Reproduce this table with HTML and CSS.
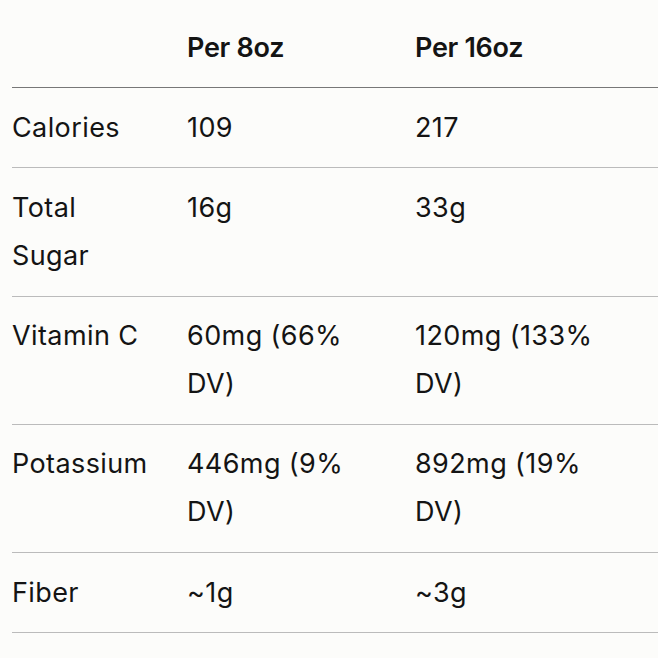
FILE: index.html
```html
<!DOCTYPE html>
<html>
<head>
<meta charset="utf-8">
<link rel="stylesheet" href="styles.css">
</head>
<body>
<div class="wrap">
<table class="nutrition">
<colgroup><col class="c1"><col class="c2"><col class="c3"></colgroup>
<thead>
<tr><th></th><th>Per 8oz</th><th>Per 16oz</th></tr>
</thead>
<tbody>
<tr><td>Calories</td><td>109</td><td>217</td></tr>
<tr><td>Total Sugar</td><td>16g</td><td>33g</td></tr>
<tr><td>Vitamin C</td><td>60mg (66% DV)</td><td>120mg (133% DV)</td></tr>
<tr><td>Potassium</td><td>446mg (9% DV)</td><td>892mg (19% DV)</td></tr>
<tr><td>Fiber</td><td>~1g</td><td>~3g</td></tr>
</tbody>
</table>
</div>
</body>
</html>
```
FILE: styles.css
```css
html, body {
  margin: 0;
  padding: 0;
  background: #fcfcfa;
}
.wrap {
  padding: 8px 0 0 12px;
}
.nutrition {
  width: 646px;
  border-collapse: collapse;
  table-layout: fixed;
  font-family: Inter, "Liberation Sans", sans-serif;
  font-size: 27px;
  letter-spacing: 0.4px;
  line-height: 48px;
  color: #141414;
}
.c1 { width: 175px; }
.c2 { width: 228px; }
.c3 { width: 243px; }
.nutrition th, .nutrition td {
  text-align: left;
  vertical-align: top;
  padding: 15.6px 38px 15.6px 0;
}
.nutrition th {
  font-weight: 600;
  letter-spacing: -0.3px;
  border-bottom: 1px solid #777;
}
.nutrition td {
  font-weight: 400;
  border-bottom: 1px solid #bbb;
}
```
